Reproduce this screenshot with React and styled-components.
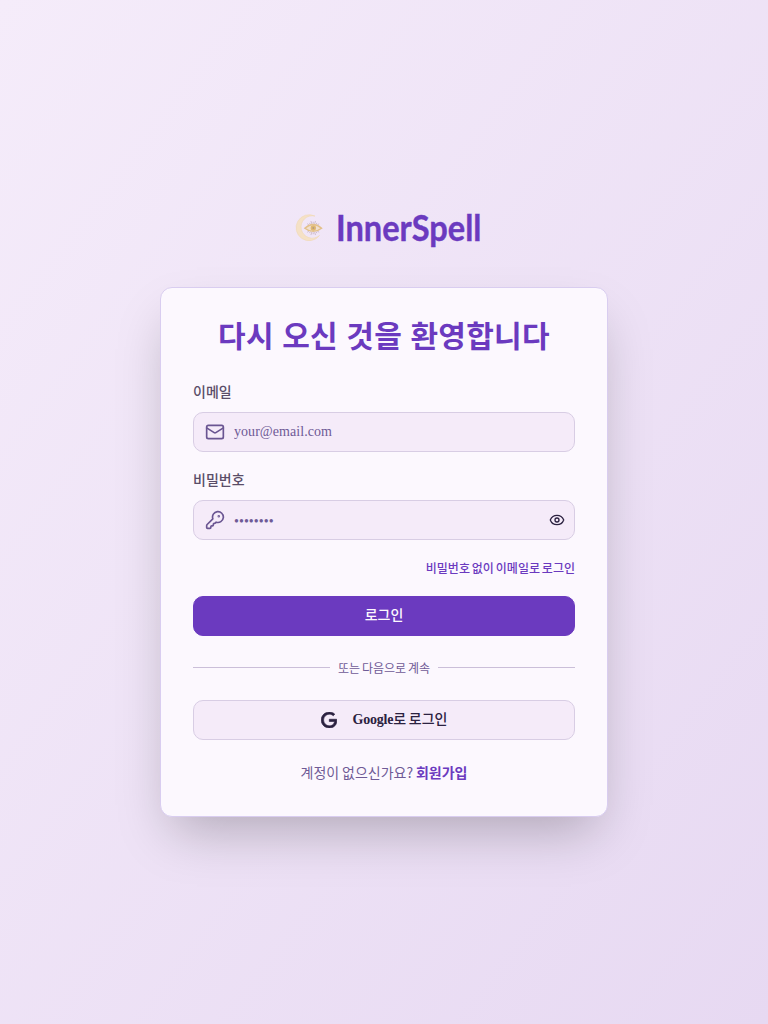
import React from "react";
import styled, { createGlobalStyle } from "styled-components";
import { Mail, KeyRound, Eye } from "lucide-react";

const Global = createGlobalStyle`
  *, *::before, *::after { box-sizing: border-box; }
  body { margin: 0; font-family: "Liberation Serif", "Noto Sans CJK KR", serif; }
`;

const Page = styled.main`
  min-height: 1024px;
  display: flex;
  flex-direction: column;
  align-items: center;
  padding-top: 208px;
  background: linear-gradient(to bottom right, #f5ecfa, #e7d9f2);
`;

const Brand = styled.div`
  display: flex;
  align-items: center;
  gap: 11.5px;
  height: 40px;
  width: 192px;
  margin-bottom: 39px;
  svg { flex-shrink: 0; }
`;

const BrandName = styled.span`
  font: 700 36px/40px Lato, sans-serif;
  color: #6b3abf;
  padding-bottom: 2px;
  -webkit-text-stroke: 0.4px #6b3abf;
  transform: scaleX(0.905);
  transform-origin: left center;
  white-space: nowrap;
`;

const Card = styled.section`
  width: 448px;
  height: 530px;
  padding: 28px 32px 0;
  border: 1px solid #d9cdf0;
  border-radius: 12px;
  background: #fcf8fe;
  box-shadow: 0 25px 50px -12px rgba(0, 0, 0, 0.25);
`;

const Title = styled.h1`
  margin: 0 0 29px;
  font: 700 30px/36px "Noto Sans CJK KR", sans-serif;
  color: #6b3abf;
  text-align: center;
  letter-spacing: 0.3px;
  word-spacing: 1.2px;
`;

const Label = styled.label`
  display: block;
  height: 20px;
  margin-bottom: 11px;
  font: 500 14px/20px "Noto Sans CJK KR", sans-serif;
  color: #5a4d68;
`;

const Field = styled.div`
  display: flex;
  align-items: center;
  height: 40px;
  margin-bottom: ${(p) => p.$gap}px;
  padding: 0 9px 0 11px;
  border: 1px solid #d8cde4;
  border-radius: 10px;
  background: #f5ebf9;
  color: #6a5592;
`;

const Input = styled.input`
  flex: 1;
  min-width: 0;
  margin-left: 9px;
  padding: ${(p) => p.$drop || 0}px 0 ${(p) => p.$lift || 0}px;
  border: 0;
  outline: 0;
  background: transparent;
  font: 14px/20px "Liberation Serif", serif;
  letter-spacing: ${(p) => p.$spacing || 0}px;
  &::placeholder { color: #6f5a96; opacity: 1; }
`;

const Reveal = styled.span`
  display: flex;
  color: #2b2140;
`;

const MagicLink = styled.a`
  display: block;
  height: 16px;
  margin-bottom: 20px;
  text-align: right;
  font: 500 12px/16px "Noto Sans CJK KR", sans-serif;
  word-spacing: -0.8px;
  color: #6b3abf;
`;

const Button = styled.button`
  display: flex;
  align-items: center;
  justify-content: center;
  gap: 16px;
  width: 100%;
  height: 40px;
  padding: 0 0 ${(p) => (p.$primary ? 4 : 2)}px;
  border: 1px solid ${(p) => (p.$primary ? "#6b3abf" : "#d8cde4")};
  border-radius: 10px;
  background: ${(p) => (p.$primary ? "#6b3abf" : "#f5ebf9")};
  color: ${(p) => (p.$primary ? "#fcf8fe" : "#2b2140")};
  font: 500 14px/20px "Noto Sans CJK KR", sans-serif;
  word-spacing: -0.5px;
  svg { margin-top: 2px; }
`;

const Latin = styled.span`
  font-family: "Liberation Serif", serif;
  font-weight: 700;
  letter-spacing: -0.2px;
`;

const Divider = styled.div`
  display: flex;
  align-items: center;
  gap: 8px;
  height: 16px;
  margin: 23.5px 0 24.5px;
  font: 400 12px/16px "Noto Sans CJK KR", sans-serif;
  word-spacing: -0.8px;
  color: #6f5a96;
  white-space: nowrap;
  &::before, &::after { content: ""; flex: 1; height: 1px; background: #cbbfd9; }
`;

const Signup = styled.p`
  margin: 22px 0 0;
  text-align: center;
  font: 400 14px/20px "Noto Sans CJK KR", sans-serif;
  word-spacing: -0.3px;
  color: #6f5a96;
  strong { font-weight: 700; color: #6b3abf; }
`;

const rays = Array.from({ length: 20 }, (_, i) => {
  const a = (i * Math.PI) / 10;
  return [Math.cos(a), Math.sin(a), i % 2 ? 6.3 : 7.4];
});

function MoonLogo() {
  return (
    <svg width="36" height="36" viewBox="0 0 36 36" fill="none">
      <path d="M27 6.1A13 13 0 1 0 31.5 25.5A11.2 11.2 0 1 1 27 6.1Z" fill="#f5e1c6" stroke="#f0d9b6" strokeWidth=".6" />
      {rays.map(([x, y, r], i) => (
        <path key={i} d={`M${25.2 + x * 4.6} ${18 + y * 4.3}L${25.2 + x * r} ${18 + y * r}`} stroke="#c0abb8" strokeWidth=".7" />
      ))}
      <path d="M16.8 18.2Q25.2 10.6 33.6 18.2Q25.2 24.6 16.8 18.2Z" fill="#f1dfcf" stroke="#e3c08a" strokeWidth="1.4" />
      <circle cx="25.3" cy="18" r="2.7" fill="#dfb870" />
      <circle cx="25.3" cy="18" r="1" fill="#b59a83" />
    </svg>
  );
}

function GoogleIcon() {
  return (
    <svg width="16" height="16" viewBox="0 0 24 24" fill="currentColor" stroke="currentColor" strokeWidth="1">
      <path d="M12.48 10.92v3.28h7.84c-.24 1.84-.853 3.187-1.787 4.133-1.147 1.147-2.933 2.4-6.053 2.4-4.827 0-8.6-3.893-8.6-8.72s3.773-8.72 8.6-8.72c2.6 0 4.507 1.027 5.907 2.347l2.307-2.307C18.747 1.44 16.133 0 12.48 0 5.867 0 .307 5.387.307 12s5.56 12 12.173 12c3.573 0 6.267-1.173 8.373-3.36 2.16-2.16 2.84-5.213 2.84-7.667 0-.76-.053-1.467-.173-2.053H12.48z" />
    </svg>
  );
}

export default function App() {
  return (
    <>
      <Global />
      <Page>
        <Brand>
          <MoonLogo />
          <BrandName>InnerSpell</BrandName>
        </Brand>
        <Card>
          <Title>다시 오신 것을 환영합니다</Title>
          <Label>이메일</Label>
          <Field $gap={17}>
            <Mail size={20} />
            <Input placeholder="your@email.com" $spacing={0.05} $lift={1} />
          </Field>
          <Label>비밀번호</Label>
          <Field $gap={20}>
            <KeyRound size={20} />
            <Input placeholder="••••••••" $spacing={0.05} $drop={3} />
            <Reveal><Eye size={16} /></Reveal>
          </Field>
          <MagicLink>비밀번호 없이 이메일로 로그인</MagicLink>
          <Button $primary>로그인</Button>
          <Divider>또는 다음으로 계속</Divider>
          <Button>
            <GoogleIcon />
            <span><Latin>Google</Latin>로 로그인</span>
          </Button>
          <Signup>계정이 없으신가요? <strong>회원가입</strong></Signup>
        </Card>
      </Page>
    </>
  );
}
